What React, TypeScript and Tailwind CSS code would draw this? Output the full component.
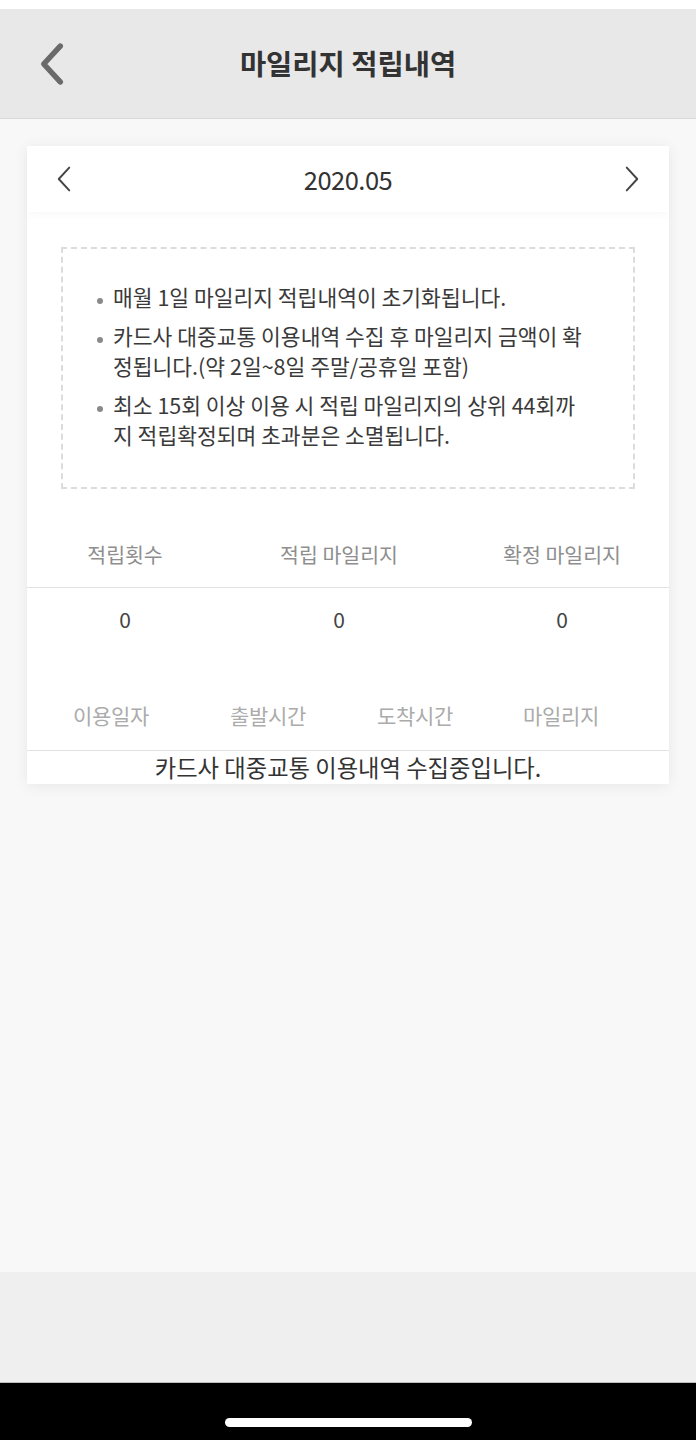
import React from "react";

const font = { fontFamily: '"Noto Sans CJK KR", "Noto Sans", sans-serif' };

function Chevron({ dir, className, stroke, width }: { dir: "left" | "right"; className?: string; stroke: string; width: number }) {
  return (
    <svg className={className} viewBox="0 0 20 32" fill="none">
      {dir === "left" ? (
        <path d="M16 3 L4 16 L16 29" stroke={stroke} strokeWidth={width} strokeLinecap="round" strokeLinejoin="round" />
      ) : (
        <path d="M4 3 L16 16 L4 29" stroke={stroke} strokeWidth={width} strokeLinecap="round" strokeLinejoin="round" />
      )}
    </svg>
  );
}

const notes: string[] = [
  "매월 1일 마일리지 적립내역이 초기화됩니다.",
  "카드사 대중교통 이용내역 수집 후 마일리지 금액이 확정됩니다.(약 2일~8일 주말/공휴일 포함)",
  "최소 15회 이상 이용 시 적립 마일리지의 상위 44회까지 적립확정되며 초과분은 소멸됩니다.",
];

export default function App() {
  return (
    <div className="w-[696px] h-[1440px] flex flex-col bg-[#f8f8f8]" style={font}>
      <div className="h-[9px] bg-white" />
      <header className="h-[110px] bg-[#e8e8e8] border-b border-[#d8d8d8] flex items-center px-[38px]">
        <div className="w-[40px] flex items-center">
          <Chevron dir="left" className="w-[28px] h-[44px]" stroke="#6a6a6a" width={4} />
        </div>
        <h1 className="flex-1 text-center text-[28.5px] font-bold text-[#333] leading-none">마일리지 적립내역</h1>
        <div className="w-[40px]" />
      </header>
      <main className="flex-1 px-[27px] pt-[27px]">
        <div className="bg-white shadow-[0_2px_14px_rgba(0,0,0,0.07)]">
          <div className="h-[66px] flex items-center justify-between px-[27px] shadow-[0_4px_6px_rgba(0,0,0,0.025)] relative">
            <Chevron dir="left" className="w-[20px] h-[28px]" stroke="#444" width={2.2} />
            <span className="text-[25.5px] text-[#333] leading-none tracking-[-0.5px]">2020.05</span>
            <Chevron dir="right" className="w-[20px] h-[28px]" stroke="#444" width={2.2} />
          </div>
          <div className="px-[34px] pt-[35px]">
            <div className="h-[242px] border-2 border-dashed border-[#dcdcdc] pt-[33px] pl-[32px]">
              <ul className="flex flex-col gap-[9px]">
                {notes.map((n) => (
                  <li key={n} className="flex">
                    <span className="w-[18px] h-[30px] flex items-center pt-[8px] shrink-0">
                      <span className="w-[6px] h-[6px] rounded-full bg-[#8a8a8a] ml-[2px]" />
                    </span>
                    <span className="w-[476px] text-[21.5px] leading-[30px] text-[#3a3a3a]">{n}</span>
                  </li>
                ))}
              </ul>
            </div>
          </div>
          <div className="mt-[50px] grid grid-cols-[196px_232px_214px] pb-[18px] border-b border-[#e2e2e2] text-[20.5px] leading-[30px] text-[#8e8e8e] text-center">
            <span>적립횟수</span>
            <span>적립 마일리지</span>
            <span>확정 마일리지</span>
          </div>
          <div className="pt-[16px] grid grid-cols-[196px_232px_214px] text-[21px] leading-[30px] text-[#444] text-center">
            <span>0</span>
            <span>0</span>
            <span>0</span>
          </div>
          <div className="mt-[66px] grid grid-cols-[168px_146px_148px_144px] pb-[20px] border-b border-[#e2e2e2] text-[21px] leading-[30px] text-[#ababab] text-center tracking-[-0.3px]">
            <span>이용일자</span>
            <span>출발시간</span>
            <span>도착시간</span>
            <span>마일리지</span>
          </div>
          <p className="text-center text-[23.3px] leading-[32px] text-[#333] pb-[1px]">카드사 대중교통 이용내역 수집중입니다.</p>
        </div>
      </main>
      <div className="h-[110px] bg-[#efefef]" />
      <div className="h-[58px] bg-black border-t border-[#bdbdbd] flex justify-center pt-[35px]">
        <div className="w-[247px] h-[9px] rounded-full bg-white" />
      </div>
    </div>
  );
}
